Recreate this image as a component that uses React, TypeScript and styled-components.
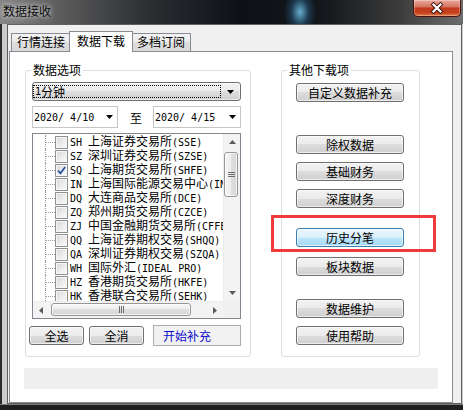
import React from "react";
import styled, { createGlobalStyle } from "styled-components";

const CJK = `"Noto Sans CJK SC", "Noto Sans", sans-serif`;
const MONO = `"DejaVu Sans Mono", "Liberation Mono", monospace`;

const GlobalStyle = createGlobalStyle`
  html, body { margin: 0; padding: 0; background: #111; }
  body { font-family: ${CJK}; font-size: 12px; color: #000; }
  * { box-sizing: border-box; }
`;

const Window = styled.div`
  width: 463px;
  height: 410px;
  display: flex;
  flex-direction: column;
  overflow: hidden;
`;

const TitleBar = styled.div`
  height: 24px;
  flex: none;
  display: flex;
  justify-content: space-between;
  align-items: flex-start;
  padding: 0 2px 0 3px;
  background:
    radial-gradient(ellipse 16px 24px at 300px 12px, rgba(110, 190, 225, 0.9), rgba(40, 100, 140, 0.45) 55%, rgba(0, 0, 0, 0) 100%),
    linear-gradient(to right, #868686 0%, #5e5e5e 12%, #2c2e32 32%, #0d1116 52%, #14171b 70%, #3b3b3b 86%, #6e6e6e 100%);
`;

const TitleText = styled.div`
  margin-top: 4px;
  font-size: 12px;
  line-height: 14px;
  color: #0b0b0b;
  text-shadow: 0 0 5px rgba(255, 255, 255, 0.75), 0 0 9px rgba(255, 255, 255, 0.5);
`;

const CloseButton = styled.div`
  width: 48px;
  height: 17px;
  display: flex;
  align-items: center;
  justify-content: center;
  border: 1px solid #4a140c;
  border-top: none;
  border-radius: 0 0 5px 5px;
  background: linear-gradient(#eaa99c 0%, #d57462 42%, #c2391f 50%, #c4401f 78%, #e07a42 100%);
  box-shadow: inset 0 0 0 1px rgba(255, 255, 255, 0.3);
`;

const FrameBody = styled.div`
  flex: 1;
  display: flex;
  padding: 0 1px 6px 7px;
  background:
    linear-gradient(to bottom, rgba(0,0,0,0) 0, rgba(0,0,0,0) calc(100% - 6px), #7b7b7b calc(100% - 6px), #7b7b7b calc(100% - 5px), #1f1f1f calc(100% - 5px)),
    linear-gradient(to right, #2b2b2b 0, #2b2b2b 2px, #cbcbcb 2px, #cbcbcb 100%);
`;

const Client = styled.div`
  flex: 1;
  display: flex;
  flex-direction: column;
  border: 1px solid #5f5f5f;
  background: #f0f0f0;
  padding: 6px 8px 0 1px;
`;

const TabStrip = styled.div`
  height: 20px;
  flex: none;
  display: flex;
  align-items: flex-end;
  padding-left: 2px;
`;

const Tab = styled.div<{ $active?: boolean }>`
  position: relative;
  z-index: ${(p) => (p.$active ? 2 : 0)};
  height: ${(p) => (p.$active ? 21 : 18)}px;
  margin: 0 ${(p) => (p.$active ? -2 : 0)}px ${(p) => (p.$active ? -1 : 0)}px;
  padding: 0 ${(p) => (p.$active ? 7 : 5)}px;
  border: 1px solid #898c95;
  border-bottom: none;
  background: ${(p) =>
    p.$active ? "#ffffff" : "linear-gradient(#f3f3f3 0%, #ebebeb 50%, #dedede 50%, #d9d9d9 100%)"};
  font-size: 12px;
  line-height: ${(p) => (p.$active ? 18 : 16)}px;
  white-space: nowrap;
`;

const Panel = styled.div`
  position: relative;
  flex: 1;
  display: flex;
  flex-direction: column;
  border: 1px solid #898c95;
  background: #ffffff;
  padding: 11px 0 0 15px;
`;

const GroupsRow = styled.div`
  display: flex;
  gap: 30px;
`;

const Group = styled.fieldset<{ $w: number }>`
  width: ${(p) => p.$w}px;
  margin: 0;
  padding: 0;
  min-width: 0;
  border: 1px solid #d5dfe5;
  border-radius: 3px;
`;

const Legend = styled.legend`
  margin-left: 5px;
  padding: 0 2px;
  font-size: 12px;
  line-height: 14px;
`;

const LeftContent = styled.div`
  display: flex;
  flex-direction: column;
  padding: 5px 9px 10px 6px;
`;

const Combo = styled.div`
  height: 19px;
  display: flex;
  border: 1px solid #707070;
  border-radius: 3px;
  background: linear-gradient(#f2f2f2 0%, #ebebeb 50%, #dddddd 50%, #cfcfcf 100%);
  box-shadow: inset 0 0 0 1px rgba(255, 255, 255, 0.55);
`;

const FocusRect = styled.div`
  flex: 1;
  margin: 2px 0 2px 0;
  border: 1px dotted #000;
  display: flex;
  align-items: center;
  padding-left: 1px;
  font-size: 12px;
  line-height: 13px;
`;

const ComboArrow = styled.div`
  width: 19px;
  display: flex;
  align-items: center;
  justify-content: center;
`;

const DateRow = styled.div`
  margin-top: 5px;
  height: 22px;
  display: flex;
  align-items: center;
  justify-content: space-between;
`;

const DateBox = styled.div<{ $w: number }>`
  width: ${(p) => p.$w}px;
  height: 22px;
  display: flex;
  align-items: center;
  justify-content: space-between;
  padding: 0 4px 0 1px;
  border: 1px solid #c6c6c6;
  background: #fff;
`;

const Latin = styled.span`
  font-family: ${MONO};
  font-size: 10px;
  white-space: pre;
`;

const DateSep = styled.span`
  font-size: 12px;
  margin-left: 1px;
`;

const ListBox = styled.div`
  margin-top: 5px;
  height: 186px;
  border: 1px solid #828790;
  background: #fff;
  display: grid;
  grid-template-columns: 1fr 17px;
  grid-template-rows: 1fr 17px;
`;

const Tree = styled.div`
  overflow: hidden;
  padding: 1px 0 0 12px;
`;

const Row = styled.div`
  height: 14px;
  display: flex;
  align-items: center;
  white-space: nowrap;
`;

const Connector = styled.span`
  align-self: stretch;
  width: 10px;
  flex: none;
  display: flex;
  align-items: center;
  border-left: 1px dotted #9c9c9c;
  &::after {
    content: "";
    flex: 1;
    border-top: 1px dotted #9c9c9c;
  }
`;

const Check = styled.span`
  width: 13px;
  height: 13px;
  flex: none;
  display: flex;
  align-items: center;
  justify-content: center;
  border: 1px solid #8e8f8f;
  background: linear-gradient(135deg, #d3d6da 0%, #eeeeee 60%, #fbfbfb 100%);
  box-shadow: inset 0 0 0 1px #f6f6f6;
`;

const ItemLabel = styled.span`
  margin-left: 2px;
  font-size: 12px;
  line-height: 14px;
`;

const VScroll = styled.div`
  display: flex;
  flex-direction: column;
  background: #f3f3f3;
  border-left: 1px solid #ebebeb;
`;

const HScroll = styled.div`
  display: flex;
  background: #f3f3f3;
  border-top: 1px solid #ebebeb;
`;

const Corner = styled.div`
  background: #f0f0f0;
`;

const ScrollArrow = styled.div`
  width: 16px;
  height: 16px;
  flex: none;
  display: flex;
  align-items: center;
  justify-content: center;
`;

const Spacer = styled.div`
  flex: 1;
`;

const VThumb = styled.div`
  height: 45px;
  margin: 2px 2px 0 0;
  display: flex;
  align-items: center;
  justify-content: center;
  border: 1px solid #979797;
  border-radius: 3px;
  background: linear-gradient(to right, #f6f6f6 0%, #ececec 50%, #dfdfdf 50%, #d7d7d7 100%);
  box-shadow: inset 0 0 0 1px rgba(255, 255, 255, 0.7);
`;

const HThumb = styled.div`
  width: 140px;
  margin: 1px 0 2px 2px;
  display: flex;
  align-items: center;
  justify-content: center;
  border: 1px solid #979797;
  border-radius: 3px;
  background: linear-gradient(#f6f6f6 0%, #ececec 50%, #dfdfdf 50%, #d7d7d7 100%);
  box-shadow: inset 0 0 0 1px rgba(255, 255, 255, 0.7);
`;

const Grip = styled.div<{ $vertical?: boolean }>`
  width: ${(p) => (p.$vertical ? 7 : 5)}px;
  height: ${(p) => (p.$vertical ? 5 : 7)}px;
  background: repeating-linear-gradient(
    ${(p) => (p.$vertical ? "to bottom" : "to right")},
    #6d6d6d 0px,
    #6d6d6d 1px,
    rgba(0, 0, 0, 0) 1px,
    rgba(0, 0, 0, 0) 2px
  );
`;

const ButtonRow = styled.div`
  margin: 6px 0 0 -3px;
  height: 21px;
  display: flex;
  align-items: center;
`;

const Button = styled.div<{ $w: number; $gap?: number; $hot?: boolean }>`
  width: ${(p) => p.$w}px;
  height: 19px;
  flex: none;
  margin-top: ${(p) => p.$gap ?? 0}px;
  display: flex;
  align-items: center;
  justify-content: center;
  border: 1px solid ${(p) => (p.$hot ? "#3c7fb1" : "#707070")};
  border-radius: 3px;
  background: ${(p) =>
    p.$hot
      ? "linear-gradient(#eaf6fd 0%, #d9f0fc 50%, #bee6fd 50%, #a7d9f5 100%)"
      : "linear-gradient(#f2f2f2 0%, #ebebeb 50%, #dddddd 50%, #cfcfcf 100%)"};
  box-shadow: inset 0 0 0 1px rgba(255, 255, 255, 0.6);
  font-size: 12px;
  line-height: 17px;
`;

const FlatButton = styled.div`
  width: 90px;
  height: 21px;
  margin-left: 9px;
  display: flex;
  align-items: center;
  padding-left: 9px;
  border: 1px solid #acacac;
  background: #f1f1f1;
  color: #0a0acc;
  font-size: 12px;
`;

const RightContent = styled.div`
  display: flex;
  flex-direction: column;
  padding: 6px 15px 10px 14px;
`;

const StatusBand = styled.div`
  width: 414px;
  height: 21px;
  margin: 11px 0 0 -1px;
  background: #efefef;
`;

const Highlight = styled.div`
  position: absolute;
  left: 261px;
  top: 163px;
  width: 165px;
  height: 37px;
  border: 3px solid #ef3b3b;
  pointer-events: none;
`;

const Tri = ({ dir, color = "#000" }: { dir: "up" | "down" | "left" | "right"; color?: string }) => {
  const h = dir === "up" || dir === "down";
  const w = h ? 7 : 4;
  const ht = h ? 4 : 7;
  const d =
    dir === "down"
      ? "M0 0 H7 L3.5 4 Z"
      : dir === "up"
      ? "M0 4 H7 L3.5 0 Z"
      : dir === "left"
      ? "M4 0 V7 L0 3.5 Z"
      : "M0 0 V7 L4 3.5 Z";
  return (
    <svg width={w} height={ht} viewBox={`0 0 ${w} ${ht}`}>
      <path d={d} fill={color} />
    </svg>
  );
};

const Mixed = ({ text }: { text: string }) => (
  <>
    {text.split(/([\x00-\x7f]+)/).map((part, i) =>
      part === "" ? null : i % 2 === 1 ? <Latin key={i}>{part}</Latin> : <span key={i}>{part}</span>
    )}
  </>
);

const items: { code: string; name: string; checked?: boolean }[] = [
  { code: "SH", name: "上海证券交易所(SSE)" },
  { code: "SZ", name: "深圳证券交易所(SZSE)" },
  { code: "SQ", name: "上海期货交易所(SHFE)", checked: true },
  { code: "IN", name: "上海国际能源交易中心(INE)" },
  { code: "DQ", name: "大连商品交易所(DCE)" },
  { code: "ZQ", name: "郑州期货交易所(CZCE)" },
  { code: "ZJ", name: "中国金融期货交易所(CFFEX)" },
  { code: "QQ", name: "上海证券期权交易(SHQQ)" },
  { code: "QA", name: "深圳证券期权交易(SZQA)" },
  { code: "WH", name: "国际外汇(IDEAL PRO)" },
  { code: "HZ", name: "香港期货交易所(HKFE)" },
  { code: "HK", name: "香港联合交易所(SEHK)" },
];

const rightButtons: { label: string; gap: number; hot?: boolean }[] = [
  { label: "自定义数据补充", gap: 0 },
  { label: "除权数据", gap: 33 },
  { label: "基础财务", gap: 8 },
  { label: "深度财务", gap: 8 },
  { label: "历史分笔", gap: 20, hot: true },
  { label: "板块数据", gap: 10 },
  { label: "数据维护", gap: 23 },
  { label: "使用帮助", gap: 8 },
];

export default function App() {
  return (
    <>
      <GlobalStyle />
      <Window>
        <TitleBar>
          <TitleText>数据接收</TitleText>
          <CloseButton>
            <svg width="14" height="12" viewBox="0 0 14 12">
              <path d="M3.5 2.5 L10.5 9.5 M10.5 2.5 L3.5 9.5" stroke="#3a1008" strokeWidth="4" strokeLinecap="square" />
              <path d="M3.5 2.5 L10.5 9.5 M10.5 2.5 L3.5 9.5" stroke="#ffffff" strokeWidth="2.2" strokeLinecap="square" />
            </svg>
          </CloseButton>
        </TitleBar>
        <FrameBody>
          <Client>
            <TabStrip>
              <Tab>行情连接</Tab>
              <Tab $active>数据下载</Tab>
              <Tab>多档订阅</Tab>
            </TabStrip>
            <Panel>
              <GroupsRow>
                <Group $w={226}>
                  <Legend>数据选项</Legend>
                  <LeftContent>
                    <Combo>
                      <FocusRect>
                        <Mixed text="1分钟" />
                      </FocusRect>
                      <ComboArrow>
                        <Tri dir="down" />
                      </ComboArrow>
                    </Combo>
                    <DateRow>
                      <DateBox $w={86}>
                        <Latin>2020/ 4/10</Latin>
                        <Tri dir="down" />
                      </DateBox>
                      <DateSep>至</DateSep>
                      <DateBox $w={88}>
                        <Latin>2020/ 4/15</Latin>
                        <Tri dir="down" />
                      </DateBox>
                    </DateRow>
                    <ListBox>
                      <Tree>
                        {items.map((it) => (
                          <Row key={it.code}>
                            <Connector />
                            <Check>
                              {it.checked && (
                                <svg width="9" height="9" viewBox="0 0 9 9">
                                  <path d="M1 4.5 L3.4 7.3 L8.2 1" fill="none" stroke="#2a4f9e" strokeWidth="1.7" />
                                </svg>
                              )}
                            </Check>
                            <ItemLabel>
                              <Latin>{it.code + " "}</Latin>
                              <Mixed text={it.name} />
                            </ItemLabel>
                          </Row>
                        ))}
                      </Tree>
                      <VScroll>
                        <ScrollArrow>
                          <Tri dir="up" color="#5a5a5a" />
                        </ScrollArrow>
                        <VThumb>
                          <Grip $vertical />
                        </VThumb>
                        <Spacer />
                        <ScrollArrow>
                          <Tri dir="down" color="#5a5a5a" />
                        </ScrollArrow>
                      </VScroll>
                      <HScroll>
                        <ScrollArrow>
                          <Tri dir="left" color="#5a5a5a" />
                        </ScrollArrow>
                        <HThumb>
                          <Grip />
                        </HThumb>
                        <Spacer />
                        <ScrollArrow>
                          <Tri dir="right" color="#5a5a5a" />
                        </ScrollArrow>
                      </HScroll>
                      <Corner />
                    </ListBox>
                    <ButtonRow>
                      <Button $w={55}>全选</Button>
                      <Button $w={55} style={{ marginLeft: 5 }}>全消</Button>
                      <FlatButton>开始补充</FlatButton>
                    </ButtonRow>
                  </LeftContent>
                </Group>
                <Group $w={139}>
                  <Legend>其他下载项</Legend>
                  <RightContent>
                    {rightButtons.map((b) => (
                      <Button key={b.label} $w={108} $gap={b.gap} $hot={b.hot}>
                        {b.label}
                      </Button>
                    ))}
                  </RightContent>
                </Group>
              </GroupsRow>
              <StatusBand />
              <Highlight />
            </Panel>
          </Client>
        </FrameBody>
      </Window>
    </>
  );
}
